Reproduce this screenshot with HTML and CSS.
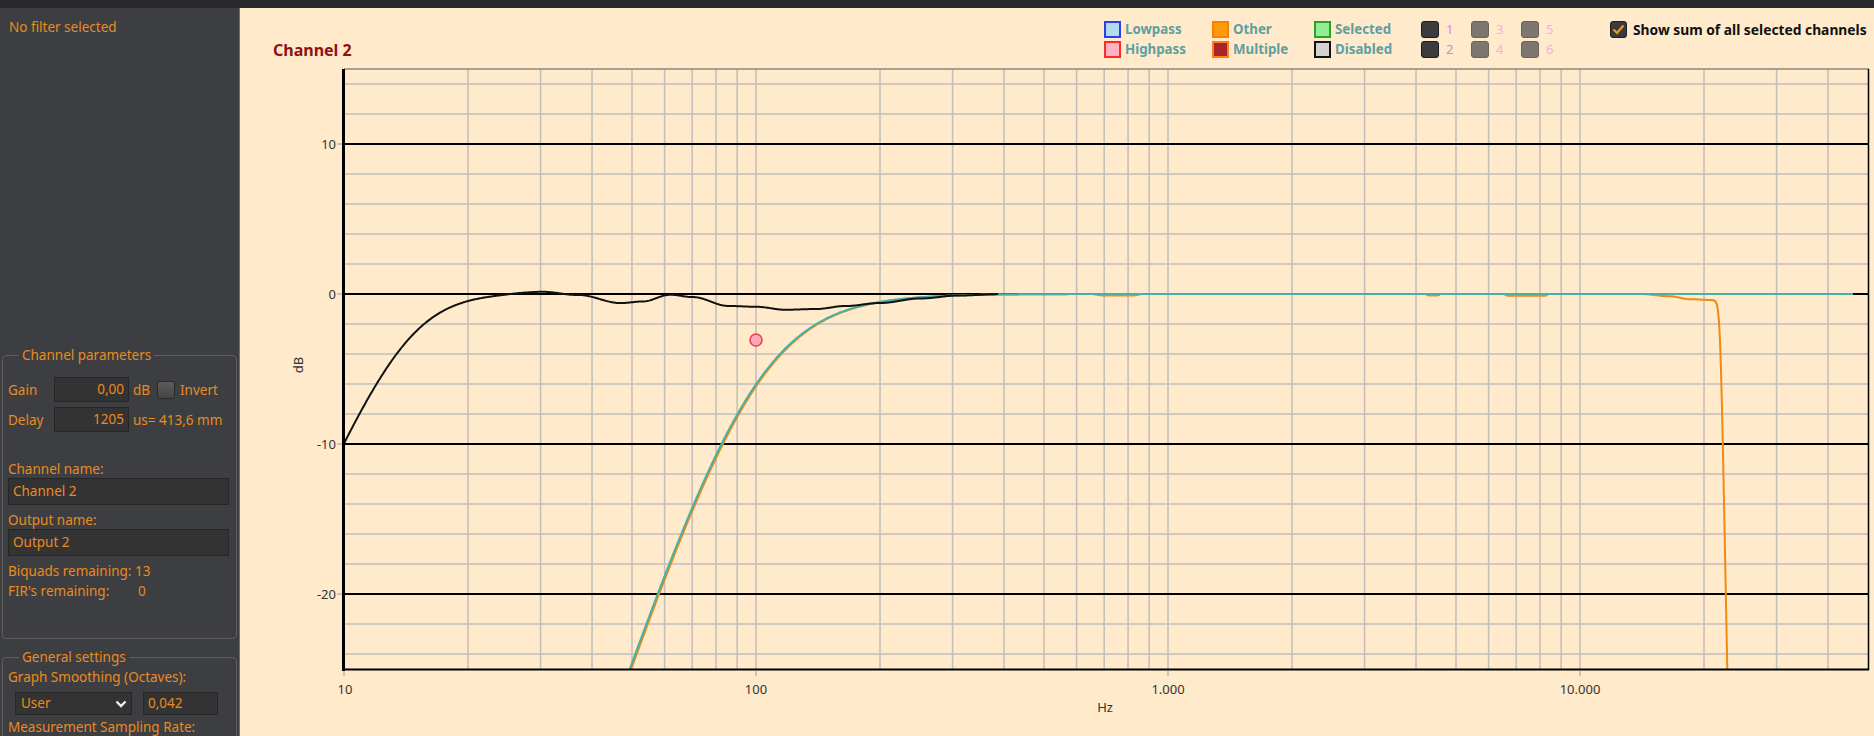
FILE: index.html
```html
<!DOCTYPE html>
<html lang="en">
<head>
<meta charset="utf-8">
<title>Channel 2</title>
<link rel="stylesheet" href="styles.css">
</head>
<body>
<div class="topbar"></div>
<div class="main">
  <aside class="sidebar">
    <div class="status">No filter selected</div>

    <fieldset class="group group-channel">
      <legend>Channel parameters</legend>
      <div class="row row-gain">
        <span class="lbl">Gain</span>
        <span class="field num">0,00</span>
        <span class="unit unit-db">dB</span>
        <span class="check"></span>
        <span class="unit">Invert</span>
      </div>
      <div class="row row-delay">
        <span class="lbl">Delay</span>
        <span class="field num">1205</span>
        <span class="unit">us= 413,6 mm</span>
      </div>
      <div class="text name-label">Channel name:</div>
      <div class="field wide">Channel 2</div>
      <div class="text out-label">Output name:</div>
      <div class="field wide">Output 2</div>
      <div class="text biquads">Biquads remaining: 13</div>
      <div class="text fir"><span class="fir-lbl">FIR's remaining:</span><span>0</span></div>
    </fieldset>

    <fieldset class="group group-general">
      <legend>General settings</legend>
      <div class="text smooth">Graph Smoothing (Octaves):</div>
      <div class="row row-smooth">
        <div class="field select"><span>User</span>
          <svg class="chev" width="12" height="8" viewBox="0 0 12 8"><path d="M1.5 1.5 L6 6 L10.5 1.5" /></svg>
        </div>
        <span class="field small">0,042</span>
      </div>
      <div class="text rate">Measurement Sampling Rate:</div>
    </fieldset>
  </aside>

  <section class="chart">
    <header class="chart-head">
      <h1 class="title">Channel 2</h1>
      <div class="legend">
        <div class="lg-item c1 r1"><span class="sw sw-low"></span><span>Lowpass</span></div>
        <div class="lg-item c1 r2"><span class="sw sw-high"></span><span>Highpass</span></div>
        <div class="lg-item c2 r1"><span class="sw sw-other"></span><span>Other</span></div>
        <div class="lg-item c2 r2"><span class="sw sw-multi"></span><span>Multiple</span></div>
        <div class="lg-item c3 r1"><span class="sw sw-sel"></span><span>Selected</span></div>
        <div class="lg-item c3 r2"><span class="sw sw-dis"></span><span>Disabled</span></div>
        <div class="ch-item c4 r1"><span class="btn btn-dark"></span><span class="num-a">1</span></div>
        <div class="ch-item c4 r2"><span class="btn btn-dark"></span><span class="num-a">2</span></div>
        <div class="ch-item c5 r1"><span class="btn btn-grey"></span><span class="num-b">3</span></div>
        <div class="ch-item c5 r2"><span class="btn btn-grey"></span><span class="num-b">4</span></div>
        <div class="ch-item c6 r1"><span class="btn btn-grey"></span><span class="num-b">5</span></div>
        <div class="ch-item c6 r2"><span class="btn btn-grey"></span><span class="num-b">6</span></div>
        <div class="sum c7 r1">
          <span class="sum-box"><svg width="13" height="11" viewBox="0 0 13 11"><path d="M1.5 5.5 L5 9 L11.5 1.5"/></svg></span>
          <span>Show sum of all selected channels</span>
        </div>
      </div>
    </header>

    <svg class="plot" id="plot" width="1634" height="676" viewBox="240 60 1634 676">
      <defs>
        <clipPath id="clip"><rect x="344" y="69" width="1525" height="601"/></clipPath>
      </defs>
      <g id="grid"></g>
      <g id="curves" clip-path="url(#clip)"></g>
      <g id="frame"></g>
      <g class="axis-text">
        <text x="336" y="149" text-anchor="end">10</text>
        <text x="336" y="299" text-anchor="end">0</text>
        <text x="336" y="449" text-anchor="end">-10</text>
        <text x="336" y="599" text-anchor="end">-20</text>
        <text x="345" y="694" text-anchor="middle">10</text>
        <text x="756" y="694" text-anchor="middle">100</text>
        <text x="1168" y="694" text-anchor="middle">1.000</text>
        <text x="1580" y="694" text-anchor="middle">10.000</text>
        <text x="1105" y="712" text-anchor="middle">Hz</text>
        <text x="0" y="0" text-anchor="middle" transform="translate(303 365) rotate(-90)">dB</text>
      </g>
    </svg>
  </section>
</div>
<script src="chart.js"></script>
</body>
</html>
```

FILE: styles.css
```css
html, body {
  margin: 0;
  padding: 0;
}
body {
  width: 1874px;
  height: 736px;
  overflow: hidden;
  background: #ffeacc;
  font-family: "Noto Sans", "Open Sans", sans-serif;
}

.topbar {
  height: 8px;
  background: #28282c;
}

.main {
  display: flex;
  height: 728px;
}

/* ---------- sidebar ---------- */
.sidebar {
  width: 240px;
  flex: 0 0 240px;
  box-sizing: border-box;
  border-right: 1px solid #70706c;
  background: #3d3e41;
  color: #e98b1f;
  font-size: 13.5px;
  display: flex;
  flex-direction: column;
  overflow: hidden;
}
.status {
  padding: 11px 9px 0;
  line-height: 16px;
}

.group {
  margin: 0 2px;
  padding: 0 4px 0 5px;
  border: 1px solid #5e5e5e;
  border-radius: 4px;
  min-width: 0;
}
.group legend {
  margin-left: 11px;
  padding: 0 3px;
  line-height: 18px;
  font-size: 13.5px;
}
.group-channel {
  margin-top: 311px;
  padding-bottom: 37px;
}
.group-general {
  margin-top: 9px;
  padding-bottom: 20px;
}

.row {
  display: flex;
  align-items: center;
}
.row-gain {
  margin-top: 13px;
  height: 25px;
}
.row-delay {
  margin-top: 5px;
  height: 25px;
}
.lbl {
  width: 46px;
}
.unit {
  margin-left: 4px;
}
.unit-db {
  width: 24px;
}
.check {
  width: 18px;
  height: 18px;
  box-sizing: border-box;
  border: 1px solid #2a2a2a;
  border-radius: 3px;
  background: linear-gradient(#5c5c5c, #444);
  margin-right: 1px;
}

.field {
  box-sizing: border-box;
  background: #333334;
  border: 1px solid #262627;
  color: #e98b1f;
  line-height: 23px;
  padding: 0 4px;
}
.num {
  width: 75px;
  height: 25px;
  text-align: right;
}
.wide {
  width: 221px;
  height: 27px;
  line-height: 25px;
}
.text {
  line-height: 18px;
}
.name-label {
  margin-top: 28px;
}
.out-label {
  margin-top: 6px;
}
.biquads {
  margin-top: 5px;
  line-height: 20px;
}
.fir {
  line-height: 20px;
  display: flex;
}
.fir-lbl {
  width: 130px;
}

.smooth {
  margin-top: 1px;
  line-height: 20px;
}
.row-smooth {
  margin-top: 5px;
  height: 23px;
}
.select {
  width: 117px;
  height: 23px;
  line-height: 21px;
  margin-left: 7px;
  display: flex;
  justify-content: space-between;
  align-items: center;
  padding: 0 4px 0 5px;
}
.chev {
  display: block;
}
.chev path {
  fill: none;
  stroke: #f0f0f0;
  stroke-width: 2.4;
}
.small {
  width: 75px;
  height: 23px;
  line-height: 21px;
  margin-left: 11px;
}
.rate {
  margin-top: 2px;
  line-height: 20px;
  white-space: nowrap;
}

/* ---------- chart ---------- */
.chart {
  flex: 1;
  background: #ffeacc;
  display: flex;
  flex-direction: column;
}
.chart-head {
  height: 52px;
  display: flex;
  align-items: flex-start;
}
.title {
  margin: 0;
  flex: 0 0 831px;
  padding: 33px 0 0 33px;
  font-size: 16px;
  line-height: 18px;
  font-weight: bold;
  color: #8e1212;
}
.legend {
  margin-top: 13px;
  display: grid;
  grid-template-columns: 108px 102px 107px 50px 50px 89px auto;
  grid-template-rows: 20px 20px;
  font-size: 13px;
  line-height: 17px;
}
.c1 { grid-column: 1; }
.c2 { grid-column: 2; }
.c3 { grid-column: 3; }
.c4 { grid-column: 4; }
.c5 { grid-column: 5; }
.c6 { grid-column: 6; }
.c7 { grid-column: 7; }
.r1 { grid-row: 1; }
.r2 { grid-row: 2; }

.lg-item {
  display: flex;
  align-items: flex-start;
  gap: 4px;
  font-weight: bold;
  font-size: 13.3px;
  color: #5e9fa2;
}
.sw {
  width: 17px;
  height: 17px;
  box-sizing: border-box;
  border: 2px solid;
  flex: 0 0 17px;
}
.sw-low { background: #b3dbee; border-color: #2b3ef0; }
.sw-high { background: #ffb3c3; border-color: #ff2a2a; }
.sw-other { background: #ff9a0a; border-color: #ff7e00; }
.sw-multi { background: #a8242a; border-color: #ff7e12; }
.sw-sel { background: #93ee93; border-color: #2aa22a; }
.sw-dis { background: #d3d3d3; border-color: #111; }

.ch-item {
  display: flex;
  align-items: flex-start;
  gap: 7px;
  font-size: 13px;
}
.btn {
  width: 18px;
  height: 17px;
  box-sizing: border-box;
  border-radius: 3px;
  flex: 0 0 18px;
}
.btn-dark {
  background: #3c3c3e;
  border: 1px solid #1e1e1e;
}
.btn-grey {
  background: #7e776f;
  border: 1px solid #6a635c;
}
.num-a { color: #e27ce6; }
.num-b { color: #f3acef; }

.sum {
  display: flex;
  align-items: flex-start;
  gap: 6px;
  font-weight: bold;
  color: #111;
  font-size: 13.8px;
  white-space: nowrap;
}
.sum-box {
  width: 17px;
  height: 17px;
  box-sizing: border-box;
  border-radius: 3px;
  background: #3a3a3c;
  border: 1px solid #1e1e1e;
  display: flex;
  align-items: center;
  justify-content: center;
}
.sum-box svg {
  display: block;
}
.sum-box path {
  fill: none;
  stroke: #f39a1a;
  stroke-width: 2.2;
}

.plot {
  display: block;
}
.axis-text text {
  font-family: "Noto Sans", "Open Sans", sans-serif;
  font-size: 13px;
  fill: #333;
}
.g-minor {
  stroke: #c2beb8;
  stroke-width: 1.5;
}
.g-major {
  stroke: #000;
  stroke-width: 2;
}
.f-top {
  stroke: #8a8784;
  stroke-width: 1.5;
}
.f-axis {
  stroke: #000;
  stroke-width: 3;
}
.f-bottom {
  stroke: #000;
  stroke-width: 2;
}
.f-right {
  stroke: #000;
  stroke-width: 1.5;
}
.tick {
  stroke: #999;
  stroke-width: 1;
}
.c-orange {
  fill: none;
  stroke: #f08a12;
  stroke-width: 2;
}
.c-teal {
  fill: none;
  stroke: #45b2aa;
  stroke-width: 2;
}
.c-black {
  fill: none;
  stroke: #111;
  stroke-width: 2;
}
.marker {
  fill: #ffa8b6;
  stroke: #f23a4e;
  stroke-width: 1.5;
}
```

FILE: chart.js
```js
(function () {
  var NS = 'http://www.w3.org/2000/svg';
  var X0 = 344, DEC = 412, Y0 = 294, DBPX = 15;
  var L = 344, R = 1869, T = 69, B = 670;

  function fx(f) { return X0 + DEC * (Math.log10(f) - 1); }
  function xf(x) { return Math.pow(10, 1 + (x - X0) / DEC); }
  function fy(db) { return Y0 - DBPX * db; }
  function el(tag, attrs, parent) {
    var e = document.createElementNS(NS, tag);
    for (var k in attrs) e.setAttribute(k, attrs[k]);
    parent.appendChild(e);
    return e;
  }

  var grid = document.getElementById('grid');
  var curves = document.getElementById('curves');
  var frame = document.getElementById('frame');

  // vertical grid
  for (var d = 10; d <= 10000; d *= 10) {
    for (var m = 1; m <= 9; m++) {
      var f = d * m;
      if (f === 10) continue;
      var x = fx(f);
      if (x > R - 2) break;
      el('line', { x1: x, y1: T, x2: x, y2: B, 'class': 'g-minor' }, grid);
    }
  }
  // horizontal grid (minor first, then major on top)
  var db;
  for (db = -24; db <= 14; db += 2) {
    if (db % 10 === 0) continue;
    el('line', { x1: L, y1: fy(db), x2: R, y2: fy(db), 'class': 'g-minor' }, grid);
  }
  for (db = -20; db <= 10; db += 10) {
    el('line', { x1: L, y1: fy(db), x2: R, y2: fy(db), 'class': 'g-major' }, grid);
  }

  function smoothInterp(points, f) {
    var lf = Math.log10(f);
    if (lf <= Math.log10(points[0][0])) return points[0][1];
    for (var i = 1; i < points.length; i++) {
      var l1 = Math.log10(points[i][0]);
      if (lf <= l1) {
        var l0 = Math.log10(points[i - 1][0]);
        var t = (lf - l0) / (l1 - l0);
        t = (1 - Math.cos(Math.PI * t)) / 2;
        return points[i - 1][1] + (points[i][1] - points[i - 1][1]) * t;
      }
    }
    return points[points.length - 1][1];
  }

  function hp3(f, fc) { var r6 = Math.pow(f / fc, 6); return 10 * Math.log10(r6 / (1 + r6)); }
  function lr4(f, fc) { var r4 = Math.pow(f / fc, 4); return 20 * Math.log10(r4 / (1 + r4)); }
  function lpSteep(f) { var r = Math.pow(f / 21887, 142); return -10 * Math.log10(1 + r); }

  var wobble = [
    [10, 0], [22, 0.1], [30, 0.2], [37, -0.05], [47, -0.6], [53, -0.5],
    [62, -0.05], [70, -0.2], [86, -0.8], [100, -0.85], [118, -1.05],
    [140, -1.0], [165, -0.8], [200, -0.6], [250, -0.3], [310, -0.1], [400, 0]
  ];
  var sag = [[10, 0], [14000, 0], [16500, -0.15], [18500, -0.35], [21000, -0.4]];
  /* small places where the underlying orange trace peeks out below the teal one */
  var peek = [[10, 0], [650, 0], [700, -0.1], [820, -0.1], [870, 0], [4200, 0], [4300, -0.1],
              [4500, -0.1], [4600, 0], [6500, 0], [6700, -0.12], [8200, -0.12], [8400, 0]];

  function path(x0, x1, fn) {
    var s = '';
    for (var x = x0; x <= x1; x += 1) {
      var v = fn(xf(x));
      if (v < -45) v = -45;
      s += (x === x0 ? 'M' : 'L') + x.toFixed(1) + ' ' + fy(v).toFixed(2) + ' ';
    }
    return s;
  }

  el('path', { d: path(L, R, function (f) { return lr4(f, 100.8) + smoothInterp(sag, f) + smoothInterp(peek, f) + lpSteep(f); }), 'class': 'c-orange' }, curves);
  el('path', { d: path(L, 1853, function (f) { return lr4(f, 100); }), 'class': 'c-teal' }, curves);
  el('path', {
    d: path(L, 998, function (f) {
      return hp3(f, 14.4) + smoothInterp(wobble, f);
    }), 'class': 'c-black'
  }, curves);

  el('circle', { cx: fx(100), cy: fy(-3.07), r: 6, 'class': 'marker' }, frame);

  // frame
  el('line', { x1: L, y1: T, x2: R, y2: T, 'class': 'f-top' }, frame);
  el('line', { x1: 1868.5, y1: T, x2: 1868.5, y2: B, 'class': 'f-right' }, frame);
  el('line', { x1: 342, y1: 669.5, x2: 1869, y2: 669.5, 'class': 'f-bottom' }, frame);
  el('line', { x1: 343.5, y1: T, x2: 343.5, y2: 671, 'class': 'f-axis' }, frame);

  // ticks
  [10, 0, -10, -20].forEach(function (v) {
    el('line', { x1: 337, y1: fy(v), x2: 342, y2: fy(v), 'class': 'tick' }, frame);
  });
  [10, 100, 1000, 10000].forEach(function (v) {
    el('line', { x1: fx(v), y1: 671, x2: fx(v), y2: 676, 'class': 'tick' }, frame);
  });
})();
```
